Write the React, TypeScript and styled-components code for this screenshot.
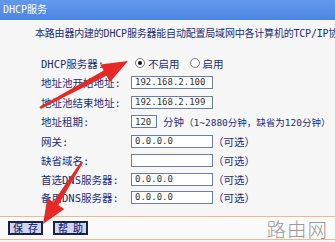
import { Fragment } from "react";
import styled, { createGlobalStyle } from "styled-components";

const GlobalStyle = createGlobalStyle`
  html, body {
    margin: 0;
    padding: 0;
    background: #f7f7f7;
  }
  body {
    font-family: "DejaVu Sans Mono", "Noto Sans CJK SC", sans-serif;
  }
`;

const Page = styled.div`
  position: relative;
  width: 335px;
  height: 242px;
  overflow: hidden;
  background: #f7f7f7;
  color: #1d2d7a;
`;

const TitleBar = styled.div`
  height: 20px;
  line-height: 20px;
  padding-left: 3px;
  background: linear-gradient(to bottom, #6399ec, #4c86e3);
  color: #fff;
  font-size: 10px;
`;

const Intro = styled.div`
  height: 34px;
  line-height: 28px;
  padding-left: 35px;
  font-size: 10px;
  letter-spacing: -0.2px;
  white-space: nowrap;
  overflow: hidden;
`;

const Form = styled.div`
  display: grid;
  grid-template-columns: 90px 1fr;
  grid-template-rows: 18px 20px 20px 19px 20px 19px 18px 18px;
  align-items: center;
  padding-left: 41px;
  font-size: 10.5px;
`;

const Label = styled.div`
  white-space: nowrap;
`;

const Field = styled.div`
  display: flex;
  align-items: center;
  white-space: nowrap;
`;

const TextBox = styled.input<{ $w: number }>`
  box-sizing: border-box;
  width: ${(p) => p.$w}px;
  height: 13px;
  padding: 0 3px;
  margin: 0;
  border: 1px solid #6d7f9c;
  background: #fff;
  color: #333;
  font-family: "DejaVu Sans Mono", monospace;
  font-size: 9px;
  outline: none;
`;

const Radio = styled.span<{ $on?: boolean }>`
  box-sizing: border-box;
  width: 10px;
  height: 10px;
  margin: 0 3px 0 4px;
  border: 1px solid #7a7a7a;
  border-radius: 50%;
  background: #fff;
  display: flex;
  align-items: center;
  justify-content: center;

  &::after {
    content: "";
    width: 4px;
    height: 4px;
    border-radius: 50%;
    background: ${(p) => (p.$on ? "#111" : "transparent")};
  }
`;

const RadioText = styled.span<{ $gap?: number }>`
  margin-right: ${(p) => p.$gap ?? 0}px;
`;

const Hint = styled.span<{ $ml?: number; $size?: number }>`
  margin-left: ${(p) => p.$ml ?? 0}px;
  font-size: ${(p) => p.$size ?? 10.5}px;
`;

const Footer = styled.div`
  display: flex;
  align-items: center;
  gap: 10px;
  height: 22px;
  margin-top: 10px;
  padding-left: 8px;
  border-top: 1px solid #f0b98c;
  border-bottom: 1px solid #f0b98c;
  background: #fbfbfb;
`;

const Button = styled.button`
  box-sizing: border-box;
  width: 35px;
  height: 14px;
  padding: 0;
  border: 2px solid #1f2140;
  background: #cfd5ef;
  color: #1d2d7a;
  font-family: "Noto Sans CJK SC", sans-serif;
  font-size: 10px;
  font-weight: 500;
  line-height: 10px;
  white-space: nowrap;
  display: flex;
  align-items: center;
  justify-content: center;
  gap: 5px;
`;

const Watermark = styled.span`
  margin-left: auto;
  margin-right: 7px;
  color: #9a9a9a;
  font-family: "Noto Sans CJK SC", sans-serif;
  font-weight: 300;
  font-size: 19.5px;
  letter-spacing: 1px;
`;

const Arrows = styled.svg`
  position: absolute;
  left: 0;
  top: 0;
  pointer-events: none;
`;

const rows = [
  { label: "地址池开始地址:", value: "192.168.2.100" },
  { label: "地址池结束地址:", value: "192.168.2.199" },
];

const optional = [
  { label: "网关:", value: "0.0.0.0" },
  { label: "缺省域名:", value: "" },
  { label: "首选DNS服务器:", value: "0.0.0.0" },
  { label: "备用DNS服务器:", value: "0.0.0.0" },
];

export default function App() {
  return (
    <>
      <GlobalStyle />
      <Page>
        <TitleBar>DHCP服务</TitleBar>
        <Intro>本路由器内建的DHCP服务器能自动配置局域网中各计算机的TCP/IP协议。</Intro>
        <Form>
          <Label>DHCP服务器:</Label>
          <Field>
            <Radio $on />
            <RadioText $gap={6}>不启用</RadioText>
            <Radio />
            <RadioText>启用</RadioText>
          </Field>

          {rows.map((r) => (
            <Fragment key={r.label}>
              <Label>{r.label}</Label>
              <Field>
                <TextBox $w={82} readOnly value={r.value} />
              </Field>
            </Fragment>
          ))}

          <Label>地址租期:</Label>
          <Field>
            <TextBox $w={26} readOnly value="120" />
            <Hint $ml={6}>分钟</Hint>
            <Hint $size={9.5}>（1~2880分钟，缺省为120分钟）</Hint>
          </Field>

          {optional.map((r) => (
            <Fragment key={r.label}>
              <Label>{r.label}</Label>
              <Field>
                <TextBox $w={82} readOnly value={r.value} />
                <Hint>（可选）</Hint>
              </Field>
            </Fragment>
          ))}
        </Form>
        <Footer>
          <Button>
            <span>保</span>
            <span>存</span>
          </Button>
          <Button>
            <span>帮</span>
            <span>助</span>
          </Button>
          <Watermark>路由网</Watermark>
        </Footer>

        <Arrows width="335" height="242" viewBox="0 0 335 242">
          <polygon
            fill="#e52a25"
            points="39.4,106.9 103.7,70.6 100.2,64.5 128,61 110,82 106.5,75.8 40.6,109.1"
          />
          <polygon
            fill="#e52a25"
            points="81,161.4 53.3,202.1 47.3,198.4 43,224 64.3,209 58.3,205.3 83,162.6"
          />
        </Arrows>
      </Page>
    </>
  );
}
